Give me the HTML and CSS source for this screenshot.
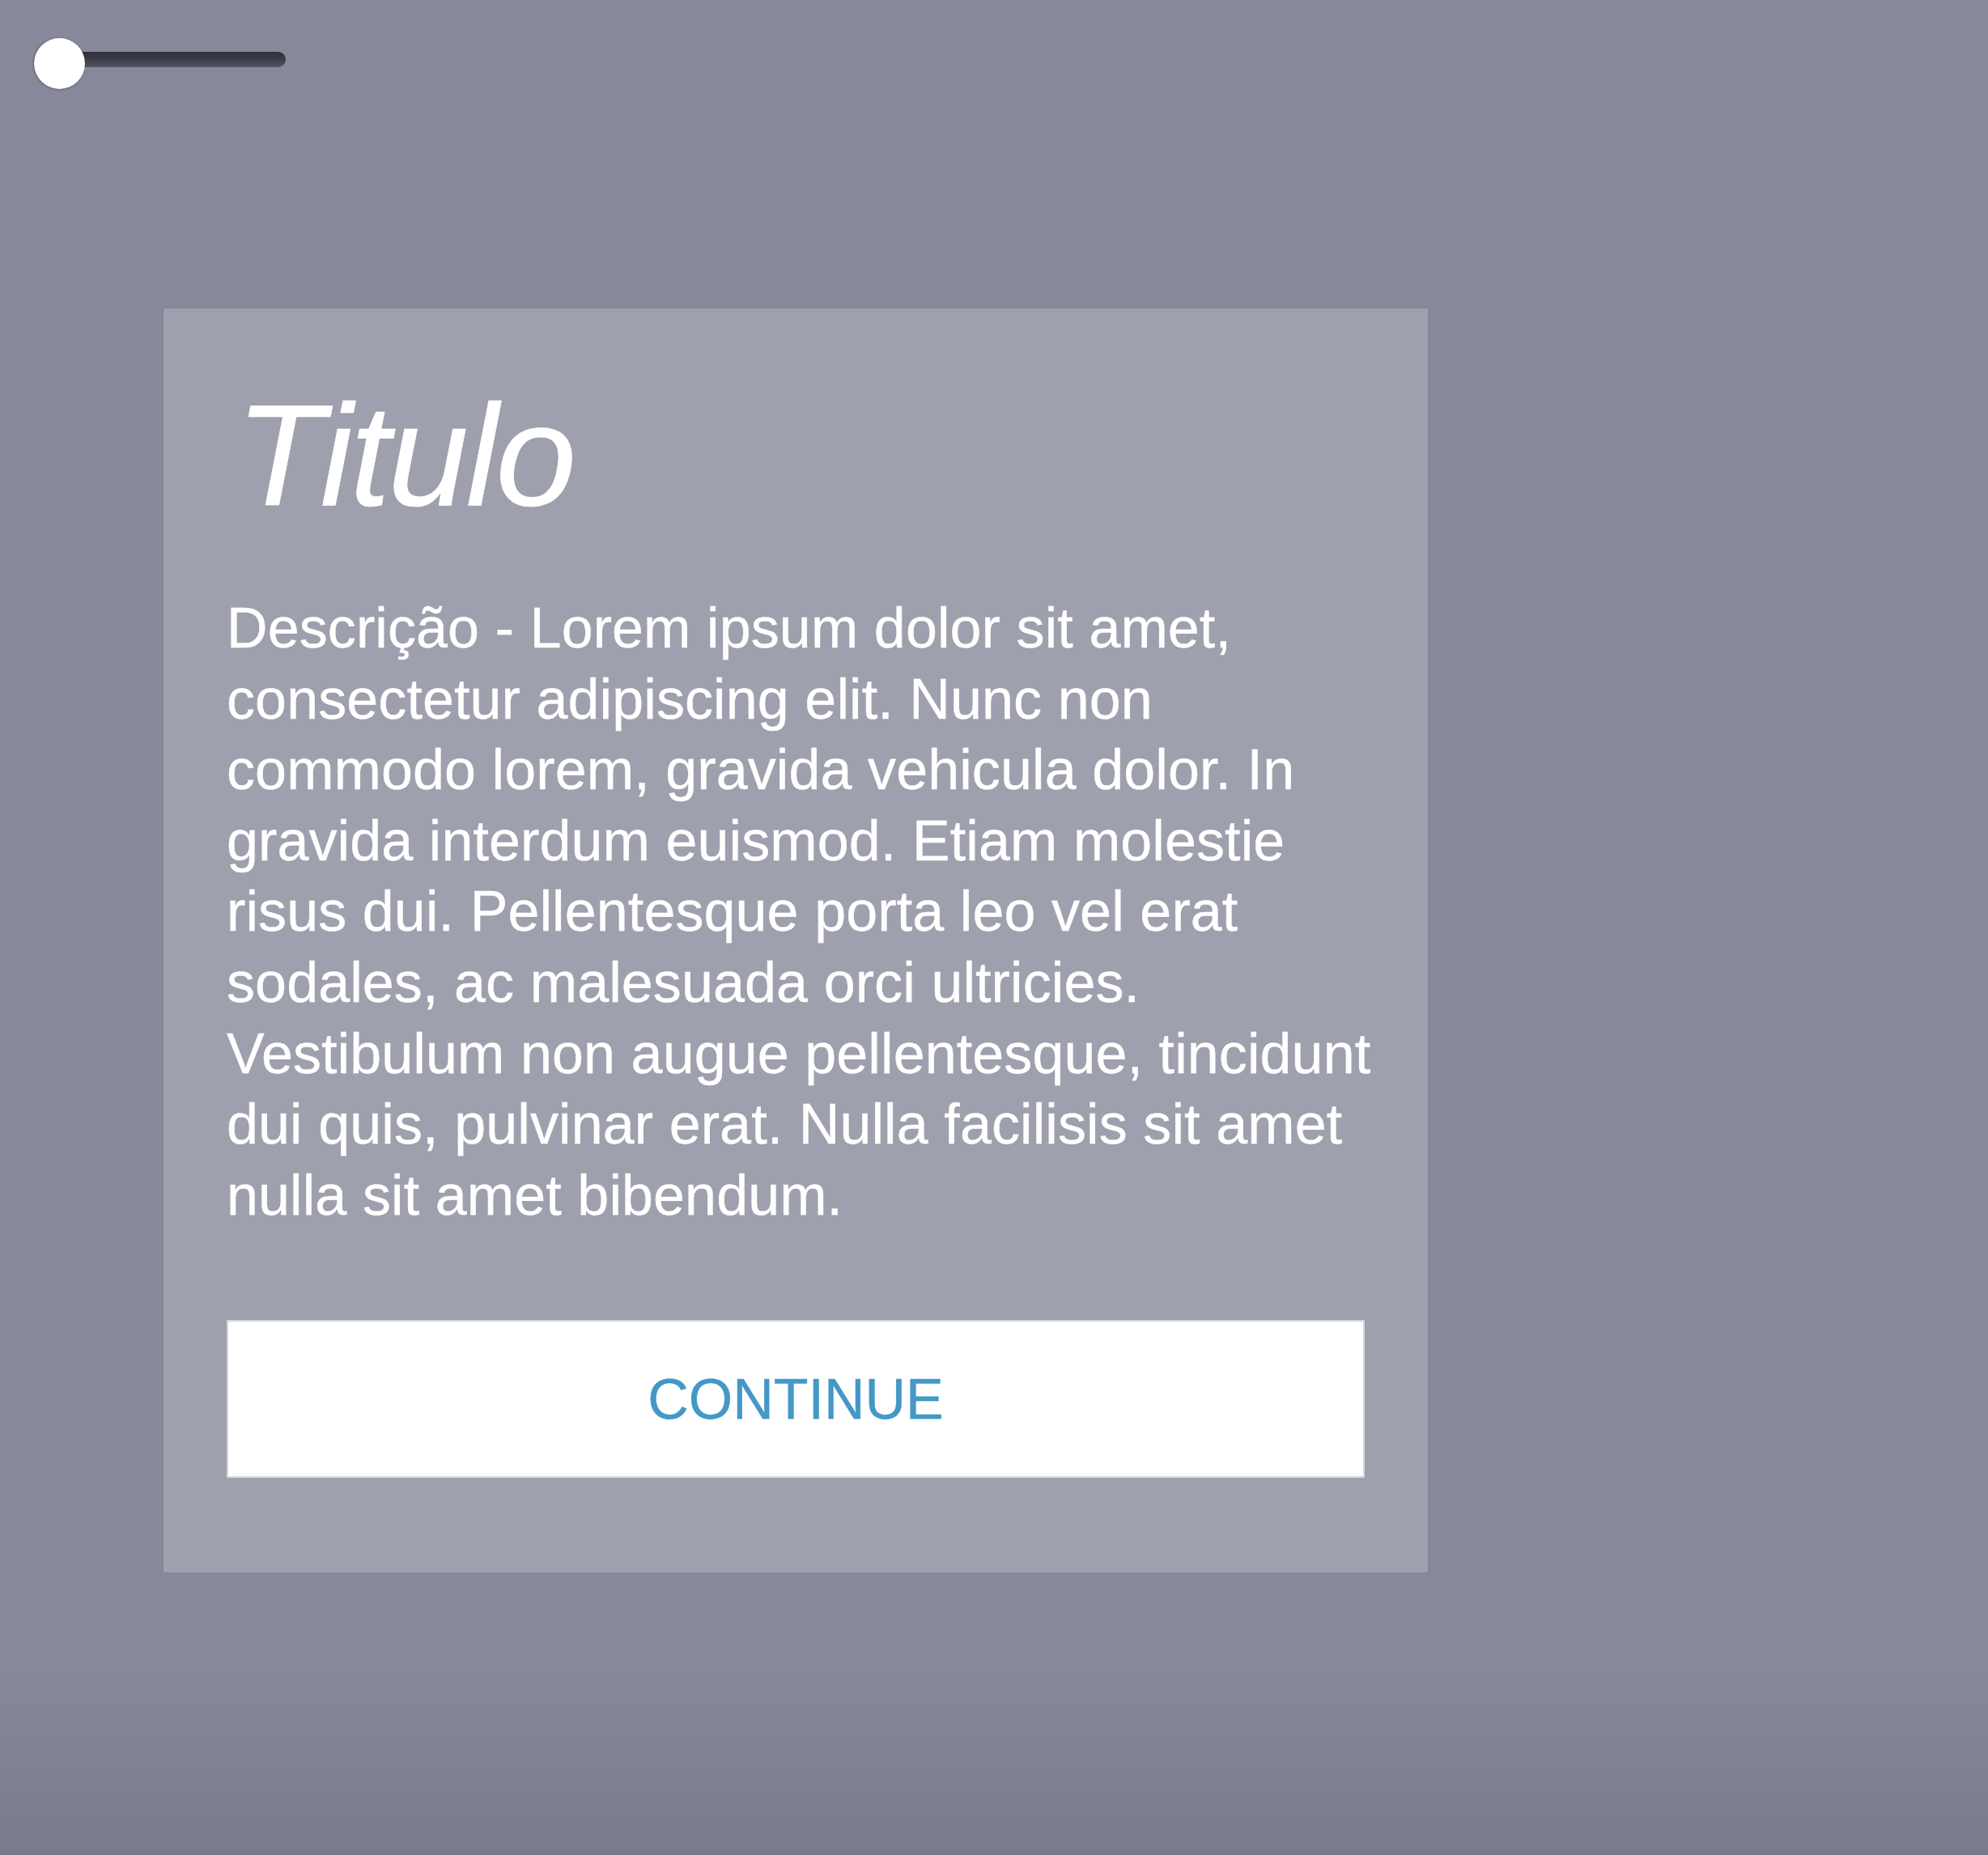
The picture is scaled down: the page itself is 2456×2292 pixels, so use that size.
FILE: index.html
```html
<!DOCTYPE html>
<html lang="pt">
<head>
<meta charset="utf-8">
<title>Titulo</title>
<link rel="stylesheet" href="styles.css">
</head>
<body>
<div class="page">
  <div class="topbar">
    <div class="slider">
      <div class="slider-track"></div>
      <div class="slider-knob"></div>
    </div>
  </div>
  <section class="card">
    <h1 class="card-title">Titulo</h1>
    <p class="card-text">Descrição - Lorem ipsum dolor sit amet, consectetur adipiscing elit. Nunc non commodo lorem, gravida vehicula dolor. In gravida interdum euismod. Etiam molestie risus dui. Pellentesque porta leo vel erat sodales, ac malesuada orci ultricies. Vestibulum non augue pellentesque, tincidunt dui quis, pulvinar erat. Nulla facilisis sit amet nulla sit amet bibendum.</p>
    <button class="card-button" type="button">CONTINUE</button>
  </section>
</div>
</body>
</html>
```
FILE: styles.css
```css
html, body {
  margin: 0;
  padding: 0;
}
body {
  width: 2456px;
  height: 2292px;
  overflow: hidden;
  background: linear-gradient(to bottom, #878899 0, #878899 2060px, #7a7b8a 2292px);
  font-family: "Liberation Sans", Arial, Helvetica, sans-serif;
}
.page {
  display: flex;
  flex-direction: column;
  align-items: flex-start;
}
.topbar {
  padding: 64px 0 0 43px;
}
.slider {
  position: relative;
  width: 310px;
  height: 19px;
}
.slider-track {
  width: 100%;
  height: 100%;
  border-radius: 10px;
  background: linear-gradient(to bottom, #30313b 0%, #45465354 100%), linear-gradient(to bottom, #3a3b46, #5e5f6f);
}
.slider-knob {
  position: absolute;
  left: -1px;
  top: -17px;
  width: 63px;
  height: 63px;
  border-radius: 50%;
  background: #ffffff;
  box-shadow: -1px 0 2px rgba(40, 40, 55, 0.35), 0 1px 3px rgba(40, 40, 55, 0.25);
}
.card {
  box-sizing: border-box;
  width: 1562px;
  margin: 298px 0 0 202px;
  padding: 92px 78px 117px;
  background: #9fa0ad;
  box-shadow: 0 0 0 1px rgba(120, 121, 138, 0.25);
  display: flex;
  flex-direction: column;
}
.card-title {
  margin: 0;
  font-size: 179px;
  line-height: 179px;
  font-weight: normal;
  font-style: italic;
  color: #ffffff;
  letter-spacing: -3px;
  padding-left: 11px;
  -webkit-text-stroke: 0.6px #ffffff;
}
.card-text {
  margin: 81px -40px 0 0;
  font-size: 70px;
  line-height: 87.6px;
  letter-spacing: 0.1px;
  color: #ffffff;
  -webkit-text-stroke: 0.4px #ffffff;
}
.card-button {
  box-sizing: border-box;
  margin-top: 110px;
  width: 100%;
  height: 195px;
  padding: 0;
  border: 2px solid #d6d7de;
  border-radius: 0;
  background: #ffffff;
  color: #4398c6;
  font-family: "Liberation Sans", Arial, Helvetica, sans-serif;
  font-size: 70px;
  line-height: 1;
  -webkit-text-stroke: 0.4px #4398c6;
  cursor: pointer;
}
```
